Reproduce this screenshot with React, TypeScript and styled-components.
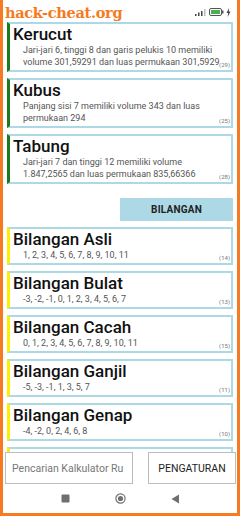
import React from 'react';
import styled, { createGlobalStyle } from 'styled-components';

const GlobalStyle = createGlobalStyle`
  html, body {
    margin: 0;
    padding: 0;
    background: #fff;
  }
  body {
    font-family: Roboto, "Liberation Sans", sans-serif;
  }
`

const Frame = styled.div`
  width: 240px;
  height: 516px;
  box-sizing: border-box;
  border: 3px solid #f57a22;
  border-top: none;
  display: flex;
  flex-direction: column;
  overflow: hidden;
  background: #fff;
`

const StatusBar = styled.div`
  height: 21px;
  flex-shrink: 0;
  display: flex;
  align-items: center;
  justify-content: space-between;
  padding: 0 6px 0 2px;
`

const Watermark = styled.div`
  font-family: "DejaVu Serif", "Liberation Serif", serif;
  font-weight: bold;
  font-size: 14.5px;
  color: #f57a22;
  letter-spacing: -0.3px;
  margin-top: 3px;
`

const StatusIcons = styled.div`
  display: flex;
  align-items: center;
  gap: 2px;
  margin-top: 3px;
`

const List = styled.div`
  flex: 1;
  min-height: 0;
  overflow: hidden;
  padding: 1px 4px 0 4px;
  display: flex;
  flex-direction: column;
`

const Card = styled.div<{ $accent: string }>`
  position: relative;
  border: 2px solid #add8e6;
  border-left: 3px solid ${p => p.$accent};
  padding: 0 10px 2px 3px;
  margin-bottom: 6px;
  flex-shrink: 0;
`

const CardTitle = styled.div`
  font-size: 17px;
  font-weight: 500;
  line-height: 20px;
  color: #111;
`

const CardText = styled.div`
  font-size: 9px;
  line-height: 12px;
  color: #555;
  margin-left: 10px;
  margin-right: -6px;
`

const Count = styled.span`
  position: absolute;
  right: 1px;
  bottom: 2px;
  font-size: 6px;
  color: #777;
`

const ButtonRow = styled.div`
  display: flex;
  justify-content: flex-end;
  margin: 8px 0 6px;
  flex-shrink: 0;
`

const SectionButton = styled.div`
  width: 113px;
  height: 23px;
  background: #add8e6;
  display: flex;
  align-items: center;
  justify-content: center;
  font-size: 10px;
  font-weight: bold;
  color: #222;
  letter-spacing: 0.2px;
`

const BottomBar = styled.div`
  height: 32px;
  flex-shrink: 0;
  display: flex;
  align-items: stretch;
  justify-content: space-between;
  padding: 0 1px 0 2px;
  background: #fff;
`

const SearchBox = styled.div`
  width: 128px;
  box-sizing: border-box;
  border: 1px solid #bdbdbd;
  display: flex;
  align-items: center;
  padding-left: 6px;
  font-size: 10.5px;
  color: #777;
  white-space: nowrap;
  overflow: hidden;
`

const SettingsButton = styled.div`
  width: 88px;
  box-sizing: border-box;
  border: 1px solid #bdbdbd;
  display: flex;
  align-items: center;
  justify-content: center;
  font-size: 10.5px;
  color: #222;
`

const NavBar = styled.div`
  height: 29px;
  flex-shrink: 0;
  display: flex;
  align-items: center;
  justify-content: center;
  gap: 45px;
`

const shapes = [
  {
    title: 'Kerucut',
    text: 'Jari-jari 6, tinggi 8 dan garis pelukis 10 memiliki volume 301,59291 dan luas permukaan 301,5929',
    count: 29,
  },
  {
    title: 'Kubus',
    text: 'Panjang sisi 7 memiliki volume 343 dan luas permukaan 294',
    count: 25,
  },
  {
    title: 'Tabung',
    text: 'Jari-jari 7 dan tinggi 12 memiliki volume 1.847,2565 dan luas permukaan 835,66366',
    count: 28,
  },
]

const numbers = [
  { title: 'Bilangan Asli', text: '1, 2, 3, 4, 5, 6, 7, 8, 9, 10, 11', count: 14 },
  { title: 'Bilangan Bulat', text: '-3, -2, -1, 0, 1, 2, 3, 4, 5, 6, 7', count: 13 },
  { title: 'Bilangan Cacah', text: '0, 1, 2, 3, 4, 5, 6, 7, 8, 9, 10, 11', count: 15 },
  { title: 'Bilangan Ganjil', text: '-5, -3, -1, 1, 3, 5, 7', count: 11 },
  { title: 'Bilangan Genap', text: '-4, -2, 0, 2, 4, 6, 8', count: 10 },
  { title: 'Bilangan Komposit', text: '4, 6, 8, 9, 10, 12', count: 12 },
]

export default function App() {
  return (
    <>
      <GlobalStyle />
      <Frame>
        <StatusBar>
          <Watermark>hack-cheat.org</Watermark>
          <StatusIcons>
            <svg width="12" height="8" viewBox="0 0 12 8">
              <rect x="0" y="6" width="1.5" height="2" fill="#444" />
              <rect x="3" y="4.5" width="1.5" height="3.5" fill="#444" />
              <rect x="6" y="3" width="1.5" height="5" fill="#444" />
              <rect x="9" y="1" width="1.5" height="7" fill="#bbb" />
            </svg>
            <svg width="15" height="8" viewBox="0 0 15 8">
              <rect x="0.5" y="0.5" width="12" height="7" rx="1.5" fill="none" stroke="#555" />
              <rect x="2" y="2" width="9" height="4" fill="#4caf50" />
              <rect x="13" y="2.5" width="1.5" height="3" fill="#555" />
            </svg>
            <svg width="5" height="9" viewBox="0 0 5 9">
              <path d="M3 0 L0.5 5 H2.2 L1.6 9 L4.5 3.6 H2.8 Z" fill="#444" />
            </svg>
          </StatusIcons>
        </StatusBar>

        <List>
          {shapes.map(s => (
            <Card key={s.title} $accent="#1c7a1c">
              <CardTitle>{s.title}</CardTitle>
              <CardText>{s.text}</CardText>
              <Count>({s.count})</Count>
            </Card>
          ))}

          <ButtonRow>
            <SectionButton>BILANGAN</SectionButton>
          </ButtonRow>

          {numbers.map(n => (
            <Card key={n.title} $accent="#ffee00">
              <CardTitle>{n.title}</CardTitle>
              <CardText>{n.text}</CardText>
              <Count>({n.count})</Count>
            </Card>
          ))}
        </List>

        <BottomBar>
          <SearchBox>Pencarian Kalkulator Ru</SearchBox>
          <SettingsButton>PENGATURAN</SettingsButton>
        </BottomBar>

        <NavBar>
          <svg width="9" height="9" viewBox="0 0 9 9">
            <rect x="0.5" y="0.5" width="8" height="8" rx="1" fill="#6f6f6f" />
          </svg>
          <svg width="11" height="11" viewBox="0 0 11 11">
            <circle cx="5.5" cy="5.5" r="4.6" fill="none" stroke="#6f6f6f" strokeWidth="1.2" />
            <circle cx="5.5" cy="5.5" r="2.6" fill="#6f6f6f" />
          </svg>
          <svg width="9" height="10" viewBox="0 0 9 10">
            <path d="M8 0.5 V9.5 L0.5 5 Z" fill="#6f6f6f" />
          </svg>
        </NavBar>
      </Frame>
    </>
  )
}
